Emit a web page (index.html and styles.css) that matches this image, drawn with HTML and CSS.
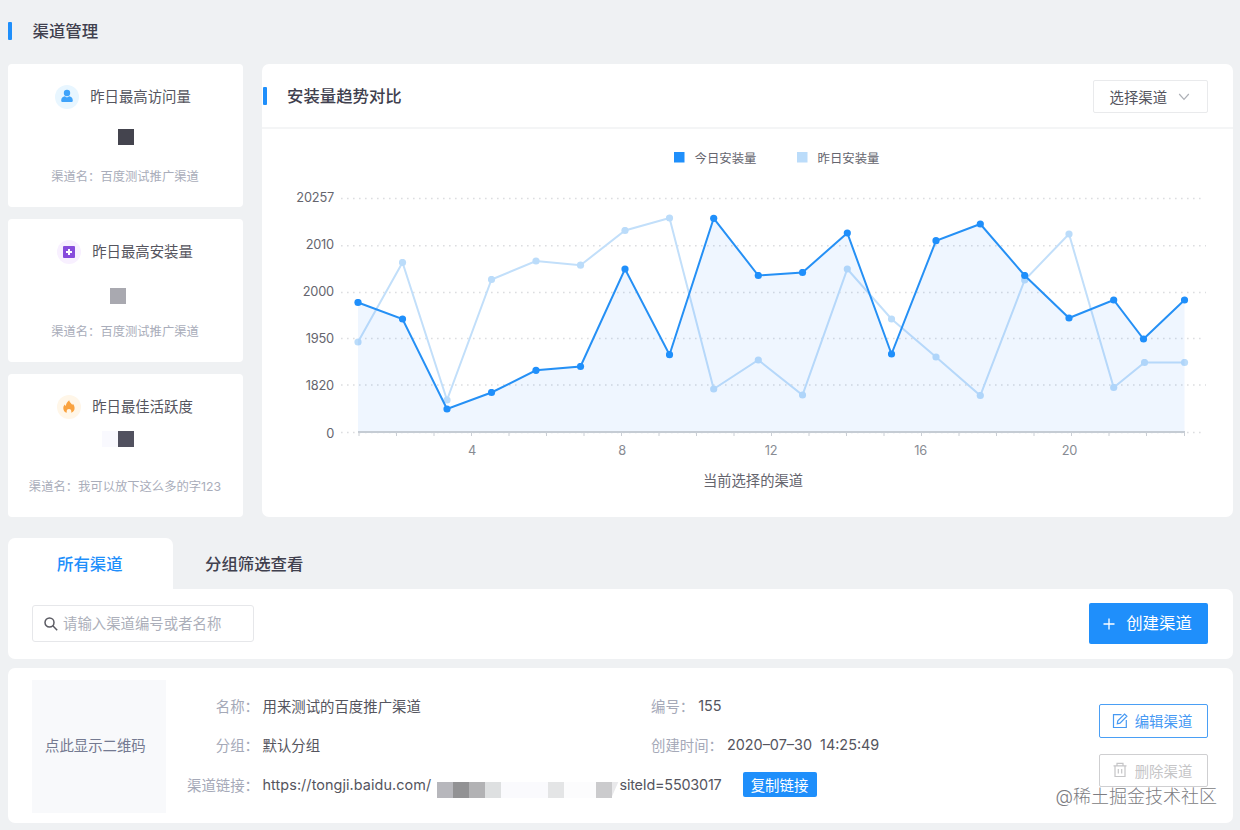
FILE: index.html
```html
<!DOCTYPE html>
<html lang="zh-CN">
<head>
    <meta charset="utf-8" />

    <title>渠道管理</title>

    <link rel="stylesheet" href="styles.css">
</head>
<body>
    <header>
        <h1>渠道管理</h1>
    </header>

    <section class="overview">
        <div class="cards">
            <div class="card visits">
                <h3>
                    <svg class="badge blue" width="24" height="24" viewBox="0 0 24 24">
                        <circle cx="12" cy="12" r="12" />
                        <path d="M12 4.8a3.2 3.2 0 1 1 0 6.4a3.2 3.2 0 0 1 0-6.4zM6.2 15.4c0-2.600 1.600-3.700 3.600-4.200l2.200 1.400 2.200-1.400c2 .5 3.600 1.600 3.600 4.200 0 1-.6 1.600-1.600 1.600H7.800c-1 0-1.600-.6-1.600-1.600z" />
                    </svg>
                    <span>昨日最高访问量</span>
                </h3>
                <div class="value first"><i class="dark"></i></div>
                <p>渠道名：百度测试推广渠道</p>
            </div>
            <div class="card">
                <h3>
                    <svg class="badge purple" width="24" height="24" viewBox="0 0 24 24">
                        <circle cx="12" cy="12" r="12" />
                        <rect x="6" y="6" width="12" height="12" rx="1" />
                        <path d="M12 9v6M9 12h6" />
                    </svg>
                    <span>昨日最高安装量</span>
                </h3>
                <div class="value second"><i class="gray"></i><i class="none"></i></div>
                <p>渠道名：百度测试推广渠道</p>
            </div>
            <div class="card">
                <h3>
                    <svg class="badge orange" width="24" height="24" viewBox="0 0 24 24">
                        <circle cx="12" cy="12" r="12" />
                        <path d="M12.2 5.2c.3 2.2 2.1 3 3 4.6.4-.2.6-.6.7-1.1 1 1.3 1.7 2.8 1.7 4.4 0 2.4-1.3 4.2-3.3 4.7v-1.600c0-1.300-1-2.100-2.300-2.100s-2.300.8-2.300 2.100v1.600c-2-.5-3.400-2.200-3.400-4.500 0-1.700.7-2.700 1.500-3.700.3.8.6 1.100 1 1.300.3-2.300 1.500-4.200 3.400-5.700z" />
                    </svg>
                    <span>昨日最佳活跃度</span>
                </h3>
                <div class="value third"><i class="faint"></i><i class="slate"></i></div>
                <p>渠道名：我可以放下这么多的字123</p>
            </div>
        </div>

        <div class="trend">
            <div class="trend-head">
                <h2>安装量趋势对比</h2>
                <button class="select">
                    <span>选择渠道</span>
                    <svg width="12" height="8" viewBox="0 0 12 8"><path d="M1.2 1L6 6.300L10.800 1" /></svg>
                </button>
            </div>
            <svg class="chart" width="971" height="388" viewBox="262 129 971 388">
                <defs>
                    <marker id="dot-today" markerUnits="userSpaceOnUse" markerWidth="8" markerHeight="8" refX="4" refY="4">
                        <circle cx="4" cy="4" r="3.6" fill="#1f8ffb" />
                    </marker>
                    <marker id="dot-before" markerUnits="userSpaceOnUse" markerWidth="8" markerHeight="8" refX="4" refY="4">
                        <circle cx="4" cy="4" r="3.6" fill="#bbdcfa" />
                    </marker>
                </defs>

                <rect x="674" y="152" width="10.5" height="10.5" fill="#1f8ffb" />
                <text class="legend" x="694.5" y="163">今日安装量</text>
                <rect x="797" y="152" width="10.5" height="10.5" fill="#bbdcfa" />
                <text class="legend" x="817.5" y="163">昨日安装量</text>

                <g class="grid">
                    <path d="M341 198.5H1205" />
                    <path d="M341 245.8H1206" />
                    <path d="M341 292.5H1206" />
                    <path d="M341 338.5H1205" />
                    <path d="M341 385H1206" />
                    <path d="M341 432.5H1205" />
                </g>
                <g class="y-axis">
                    <text x="334" y="201.5">20257</text>
                    <text x="334" y="249">2010</text>
                    <text x="334" y="296">2000</text>
                    <text x="334" y="343">1950</text>
                    <text x="334" y="390">1820</text>
                    <text x="334" y="437.5">0</text>
                </g>

                <polyline class="before" points="358,342 402.5,262.5 447,400 491.5,279.5 536,261 580.5,265.2 625,230.5 669.5,218 713.7,389 758.3,360 802.5,395 847.3,269 891.5,319 936,357 980.3,395.5 1024.7,280 1069,234 1113.7,387.5 1144.5,362.5 1184.5,362.5" />
                <polygon class="area" points="358,432 358,302.5 402.5,319 447,409 491.5,392.5 536,370.3 580.5,366.5 625,269 669.5,354.7 713.7,218.3 758.3,275.5 802.5,272.5 847.3,233 891.5,354 936,240.7 980.3,224 1024.7,275.5 1069,318 1113.7,300 1143.5,339 1184.5,300 1184.5,432" />
                <polyline class="today" points="358,302.5 402.5,319 447,409 491.5,392.5 536,370.3 580.5,366.5 625,269 669.5,354.7 713.7,218.3 758.3,275.5 802.5,272.5 847.3,233 891.5,354 936,240.7 980.3,224 1024.7,275.5 1069,318 1113.7,300 1143.5,339 1184.5,300" />

                <path class="axis" d="M358 432H1185" />
                <path class="ticks" d="M359 432v4M396.5 432v4M434 432v4M471.5 432v4M509 432v4M546.5 432v4M584 432v4M621.5 432v4M659 432v4M696.5 432v4M734 432v4M771.5 432v4M809 432v4M846.5 432v4M884 432v4M921.5 432v4M959 432v4M996.5 432v4M1034 432v4M1071.5 432v4M1109 432v4M1146.5 432v4M1184.5 432v4" />
                <g class="x-axis">
                    <text x="472" y="455">4</text>
                    <text x="622" y="455">8</text>
                    <text x="771" y="455">12</text>
                    <text x="920.5" y="455">16</text>
                    <text x="1069.5" y="455">20</text>
                </g>
                <text class="caption" x="753" y="486.3">当前选择的渠道</text>
            </svg>
        </div>
    </section>

    <nav class="tabs">
        <a class="active">所有渠道</a>
        <a>分组筛选查看</a>
    </nav>

    <section class="toolbar">
        <label class="search">
            <svg width="14" height="14" viewBox="0 0 14 14"><circle cx="5.5" cy="5.5" r="4.5" /><path d="M8.8 8.800l4.400 4.400" /></svg>
            <input type="text" placeholder="请输入渠道编号或者名称" />
        </label>
        <button class="create">
            <svg width="12" height="12" viewBox="0 0 12 12"><path d="M6 .5v11M.5 6h11" /></svg>
            <span>创建渠道</span>
        </button>
    </section>

    <section class="channel">
        <div class="qrcode">点此显示二维码</div>
        <div class="info">
            <div class="row">
                <div class="field main-field"><span class="label">名称：</span><span>用来测试的百度推广渠道</span></div>
                <div class="field"><span class="label">编号：</span><span>155</span></div>
            </div>
            <div class="row">
                <div class="field main-field"><span class="label">分组：</span><span>默认分组</span></div>
                <div class="field"><span class="label">创建时间：</span><span class="time">2020–07–30&nbsp; 14:25:49</span></div>
            </div>
            <div class="row">
                <div class="field main-field link">
                    <span class="label">渠道链接：</span>
                    <span class="host">https://tongji.baidu.com/</span>
                    <div class="mask"><i></i><i></i><i></i><i></i><i></i><i></i><i></i><i></i><i></i></div>
                    <span class="site">siteId=5503017</span>
                    <button class="copy">复制链接</button>
                </div>
            </div>
        </div>
        <div class="actions">
            <button class="edit">
                <svg width="16" height="16" viewBox="0 0 16 16"><path d="M9.5 1.700H1.500v12.800h12.800V7M5.300 10.800l.5-2.900L12.600 1l2.300 2.200-6.900 7z" /></svg>
                编辑渠道
            </button>
            <button class="delete">
                <svg width="16" height="16" viewBox="0 0 16 16"><path d="M1.5 3.800h13M5 3.800V1.300h6v2.500M3 3.800v10.700h10V3.800M6.300 7v4.500M9.700 7v4.500" /></svg>
                删除渠道
            </button>
        </div>
        <div class="watermark">@稀土掘金技术社区</div>
    </section>
</body>
</html>
```

FILE: styles.css
```css
* {
    box-sizing: border-box;
}

html, body {
    margin: 0;
    padding: 0;
}

body {
    width: 1240px;
    height: 830px;
    padding: 0 7px 0 8px;
    overflow: hidden;
    background: #eff1f3;
    color: #55555e;
    font-family: Inter, "Noto Sans CJK SC", sans-serif;
    font-size: 14.4px;
}

h1, h2, h3, p {
    margin: 0;
}

button, input {
    padding: 0;
    border: 0;
    background: none;
    color: inherit;
    font: inherit;
}

svg {
    display: block;
    flex: none;
    fill: none;
}

h1, h2 {
    display: flex;
    align-items: center;
    color: #40404e;
    font-size: 16.4px;
    font-weight: 500;
    line-height: 24px;
}

h1::before, h2::before {
    content: "";
    width: 4px;
    height: 18px;
    margin-right: 20.5px;
    border-radius: 1px;
    background: #1f8ffb;
}

h2::before {
    margin-left: 0.5px;
}

header {
    height: 64px;
    padding-top: 19px;
}

.overview {
    display: flex;
    gap: 19px;
    height: 453px;
}

.cards {
    display: flex;
    flex-direction: column;
    gap: 12px;
    width: 235px;
}

.card {
    display: flex;
    flex: 1;
    flex-direction: column;
    align-items: center;
    padding-top: 20px;
    border-radius: 4px;
    background: #fff;
}

.card h3 {
    display: flex;
    align-items: center;
    gap: 11px;
    height: 26px;
    margin-right: 1px;
    font-size: 14.4px;
    font-weight: normal;
}

.card.visits h3 {
    margin-right: 5px;
}

.card h3 span {
    padding-bottom: 3px;
}

.card p {
    margin-right: 1px;
    color: #a9adba;
    font-size: 12.3px;
    line-height: 22px;
}

.badge.blue circle {
    fill: #e8f6ff;
}

.badge.blue path {
    fill: #3fa3fa;
}

.badge.purple circle {
    fill: #f8f0ff;
}

.badge.purple rect {
    fill: #874bdc;
}

.badge.purple path {
    stroke: #fff;
    stroke-width: 2;
}

.badge.orange circle {
    fill: #fff6e8;
}

.badge.orange path {
    fill: #f9a23f;
}

.value {
    display: flex;
    height: 56px;
    padding-top: 19px;
}

.value i {
    width: 16px;
    height: 16px;
}

.value.second {
    padding-top: 23px;
}

.value.third {
    padding: 11px 16px 0 0;
}

.dark {
    background: #44444e;
}

.gray {
    background: #a9a9b0;
}

.faint {
    background: #f9f9fe;
}

.slate {
    background: #51515f;
}

.trend {
    flex: 1;
    border-radius: 7px;
    background: #fff;
}

.trend-head {
    display: flex;
    align-items: center;
    justify-content: space-between;
    height: 65px;
    padding-right: 25px;
    border-bottom: 2px solid #f4f5f6;
}

.select {
    display: flex;
    align-items: center;
    gap: 11px;
    width: 115px;
    height: 33px;
    margin-top: 2px;
    padding-left: 15.5px;
    border: 1px solid #e9eaec;
    border-radius: 2px;
}

.select span {
    padding-bottom: 1px;
}

.select svg {
    stroke: #adb0b6;
    stroke-width: 1.2;
}

.chart text {
    fill: #65656e;
    font-size: 12.8px;
    letter-spacing: -0.2px;
}

.chart .legend {
    font-size: 12.4px;
    letter-spacing: 0;
}

.chart .caption {
    font-size: 14.3px;
    letter-spacing: 0;
    text-anchor: middle;
}

.y-axis text {
    text-anchor: end;
}

.chart .x-axis text {
    fill: #888b93;
    text-anchor: middle;
}

.grid {
    stroke: #dcdde0;
    stroke-width: 1.4;
    stroke-dasharray: 1.6 4.4;
}

.before {
    stroke: #c2dffa;
    stroke-width: 2;
    marker: url(#dot-before);
}

.area {
    fill: #1f7ffb;
    fill-opacity: 0.07;
}

.today {
    stroke: #2590f5;
    stroke-width: 2;
    marker: url(#dot-today);
}

.axis {
    stroke: #c5ccd4;
    stroke-width: 2;
}

.ticks {
    stroke: #c9ced5;
}

.tabs {
    display: flex;
    height: 51px;
    margin-top: 21px;
}

.tabs a {
    padding-left: 32px;
    color: #40404e;
    font-size: 16.4px;
    font-weight: 500;
    line-height: 52px;
}

.tabs .active {
    width: 165px;
    padding-left: 49px;
    border-radius: 7px 7px 0 0;
    background: #fff;
    color: #1f8ffb;
}

.toolbar {
    display: flex;
    align-items: center;
    justify-content: space-between;
    height: 70px;
    padding: 0 25px 1px 24px;
    border-radius: 0 7px 7px 7px;
    background: #fff;
}

.search {
    display: flex;
    align-items: center;
    gap: 5px;
    width: 222px;
    height: 37px;
    padding-left: 11px;
    border: 1px solid #e6e7ea;
    border-radius: 3px;
}

.search svg {
    stroke: #5a5a62;
    stroke-width: 1.5;
}

.search input {
    flex: 1;
    min-width: 0;
}

.search input::placeholder {
    color: #acafba;
}

.create {
    display: flex;
    align-items: center;
    justify-content: center;
    gap: 11px;
    width: 119px;
    height: 41px;
    padding-right: 2px;
    border-radius: 2px;
    background: #1f8ffb;
    color: #fff;
    font-size: 16.4px;
}

.create span {
    padding-bottom: 3px;
}

.create svg {
    stroke: #fff;
    stroke-width: 1.3;
}

.channel {
    position: relative;
    display: flex;
    height: 155px;
    margin-top: 9px;
    padding: 12px 25px 0 24px;
    border-radius: 7px;
    background: #fff;
}

.qrcode {
    width: 134px;
    height: 133px;
    background: #f8f9fb;
    color: #747a91;
    line-height: 132px;
    text-indent: 13px;
}

.info {
    flex: 1;
    padding: 6px 0 0 21px;
}

.row {
    display: flex;
    height: 39px;
}

.row:last-child {
    height: 41px;
}

.field {
    display: flex;
    align-items: center;
    gap: 4px;
    white-space: nowrap;
}

.main-field {
    width: 464px;
}

.label {
    color: #a5a9b8;
}

.main-field .label {
    flex: none;
    width: 72px;
    margin-right: -0.5px;
    text-align: right;
}

.host {
    flex: none;
    width: 170px;
    letter-spacing: 0.08px;
}

.site {
    flex: none;
    width: 102px;
    margin-left: -4px;
    letter-spacing: -0.2px;
}

.mask {
    display: flex;
    flex: none;
    width: 183px;
    height: 16px;
    margin-top: 10px;
}

.mask i {
    width: 16px;
    background: #fcfcfd;
}

.mask i:nth-child(1) {
    background: #b7b7bc;
}

.mask i:nth-child(2) {
    background: #929294;
}

.mask i:nth-child(3) {
    background: #b2b2b4;
}

.mask i:nth-child(4) {
    background: #dee0e1;
}

.mask i:nth-child(5) {
    width: 47px;
    background: #fafafd;
}

.mask i:nth-child(6) {
    background: #e4e5e6;
}

.mask i:nth-child(7) {
    width: 32px;
}

.mask i:nth-child(8) {
    background: #cbcbcd;
}

.mask i:nth-child(9) {
    width: 7px;
    background: #e9e9eb;
    clip-path: polygon(0 0, 100% 0, 0 100%);
}

.copy {
    flex: none;
    width: 74px;
    height: 25px;
    margin-left: 17px;
    border-radius: 2px;
    background: #1f8ffb;
    color: #fff;
}

.actions {
    display: flex;
    flex-direction: column;
    gap: 16px;
    padding-top: 24px;
}

.actions button {
    display: flex;
    align-items: center;
    justify-content: center;
    gap: 7px;
    width: 109px;
    height: 33.5px;
    padding-right: 3px;
    border: 1px solid #4a9ff5;
    border-radius: 2px;
    color: #4699f3;
}

.actions svg {
    stroke: currentColor;
    stroke-width: 1.2;
}

.actions .delete {
    border-color: #cfcfd1;
    color: #c5c5c7;
}

.watermark {
    position: absolute;
    right: 16px;
    bottom: 13px;
    color: #7c7c82;
    font-size: 18px;
    font-weight: 300;
    line-height: 26px;
    text-shadow: 0 0 1px #fff;
}
```
